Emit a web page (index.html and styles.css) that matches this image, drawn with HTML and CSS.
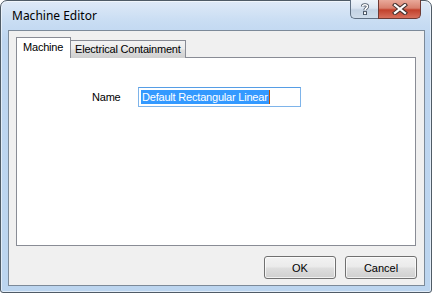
FILE: index.html
```html
<!DOCTYPE html>
<html>
<head>
<meta charset="utf-8">
<link rel="stylesheet" href="styles.css">
</head>
<body>
<div class="window">
  <div class="titlebar">
    <span class="title">Machine Editor</span>
    <div class="caption-buttons">
      <div class="cap help">
        <svg width="10" height="12" viewBox="0 0 10 12">
          <path d="M2.5 3.6 C2.5 1.2 7.5 1.2 7.5 3.6 C7.5 5.3 5 5.2 5 7.3" fill="none" stroke="#4a5666" stroke-width="3.2"/>
          <path d="M2.5 3.6 C2.5 1.2 7.5 1.2 7.5 3.6 C7.5 5.3 5 5.2 5 7.3" fill="none" stroke="#ffffff" stroke-width="1.6"/>
          <rect x="3.5" y="8.6" width="3" height="3" fill="#fff" stroke="#4a5666" stroke-width="1"/>
        </svg>
      </div>
      <div class="cap close">
        <svg width="16" height="12" viewBox="0 0 16 12">
          <path d="M3 2 L13 10 M13 2 L3 10" stroke="#45312f" stroke-width="4.2" stroke-linecap="square"/>
          <path d="M3 2 L13 10 M13 2 L3 10" stroke="#ffffff" stroke-width="2.2" stroke-linecap="square"/>
        </svg>
      </div>
    </div>
  </div>
  <div class="client">
    <div class="tabs">
      <div class="tab active">Machine</div>
      <div class="tab">Electrical Containment</div>
    </div>
    <div class="panel">
      <div class="field">
        <label class="field-label">Name</label>
        <div class="input"><span class="sel">Default Rectangular Linear</span><span class="caret"></span></div>
      </div>
    </div>
    <div class="actions">
      <button class="btn">OK</button>
      <button class="btn">Cancel</button>
    </div>
  </div>
</div>
</body>
</html>
```
FILE: styles.css
```css
html, body {
  margin: 0;
  padding: 0;
  background: #ffffff;
}
body {
  width: 435px;
  height: 295px;
  overflow: hidden;
}
.window {
  box-sizing: border-box;
  width: 432px;
  height: 293px;
  border: 1px solid #4f5b66;
  border-radius: 7px 7px 3px 3px;
  background: linear-gradient(180deg, #dfeaf7 0px, #c9ddf3 20px, #bdd5f0 40px, #bcd5ef 100%);
  display: flex;
  flex-direction: column;
  box-shadow: inset 0 0 0 1px rgba(255,255,255,0.55);
}
.titlebar {
  height: 29px;
  display: flex;
  justify-content: space-between;
  align-items: flex-start;
  padding: 0 10px 0 11px;
  flex: none;
}
.title {
  font-family: "Noto Sans", "Open Sans", sans-serif;
  font-size: 12px;
  color: #000;
  margin-top: 7px;
  line-height: 16px;
}
.caption-buttons {
  display: flex;
  margin-top: -1px;
}
.cap {
  height: 19px;
  box-sizing: border-box;
  display: flex;
  align-items: center;
  justify-content: center;
  border: 1px solid #5f6f82;
  border-top: none;
}
.help {
  width: 28px;
  border-radius: 0 0 0 5px;
  border-right: none;
  background: linear-gradient(180deg, #eef3f9 0%, #dbe5f1 45%, #c3d2e3 55%, #cfdcea 100%);
}
.close {
  width: 43px;
  border-radius: 0 0 5px 0;
  border-color: #6e3a34;
  background: linear-gradient(180deg, #e9a99a 0%, #d8806e 45%, #c2412c 55%, #d7705d 100%);
}
.client {
  flex: 1;
  margin: 0 6px 6px 7px;
  border: 1px solid #7c8a99;
  background: #f0f0f0;
  padding: 6px 7px 6px 7px;
  display: flex;
  flex-direction: column;
  font-family: "Liberation Sans", Arial, sans-serif;
  font-size: 11px;
  letter-spacing: -0.2px;
  color: #000;
}
.tabs {
  display: flex;
  align-items: flex-end;
  height: 21px;
  position: relative;
  z-index: 1;
  margin-bottom: -1px;
}
.tab {
  box-sizing: border-box;
  height: 18px;
  padding: 0 4px;
  border: 1px solid #898c95;
  border-bottom: none;
  background: linear-gradient(180deg, #f3f3f3 0%, #ebebeb 45%, #dddddd 55%, #cfcfcf 100%);
  line-height: 17px;
  margin-left: -1px;
}
.tab.active {
  height: 21px;
  background: #ffffff;
  padding: 0 6px 0 6px;
  line-height: 19px;
  margin-left: 0;
  position: relative;
  z-index: 2;
  width: 55px;
}
.panel {
  box-sizing: border-box;
  width: 400px;
  height: 189px;
  background: #ffffff;
  border: 1px solid #898c95;
  padding: 29px 0 0 75px;
}
.field {
  display: flex;
  align-items: center;
}
.field-label {
  width: 46px;
}
.input {
  box-sizing: border-box;
  width: 163px;
  height: 20px;
  border: 1px solid #7eb4ea;
  border-top-color: #569de5;
  padding: 2px 2px;
  display: flex;
  align-items: stretch;
}
.sel {
  background: #3399ff;
  color: #ffffff;
  line-height: 14px;
  padding: 0 1px;
}
.caret {
  width: 1px;
  background: #c05000;
}
.actions {
  display: flex;
  justify-content: flex-end;
  gap: 9px;
  margin-top: 10px;
  width: 401px;
}
.btn {
  box-sizing: border-box;
  width: 72px;
  height: 23px;
  border: 1px solid #707070;
  border-radius: 3px;
  background: linear-gradient(180deg, #f2f2f2 0%, #ebebeb 45%, #dddddd 55%, #cfcfcf 100%);
  font-family: "Liberation Sans", Arial, sans-serif;
  font-size: 11px;
  color: #000;
  padding: 0;
  box-shadow: inset 0 0 0 1px rgba(255,255,255,0.7);
}
```
